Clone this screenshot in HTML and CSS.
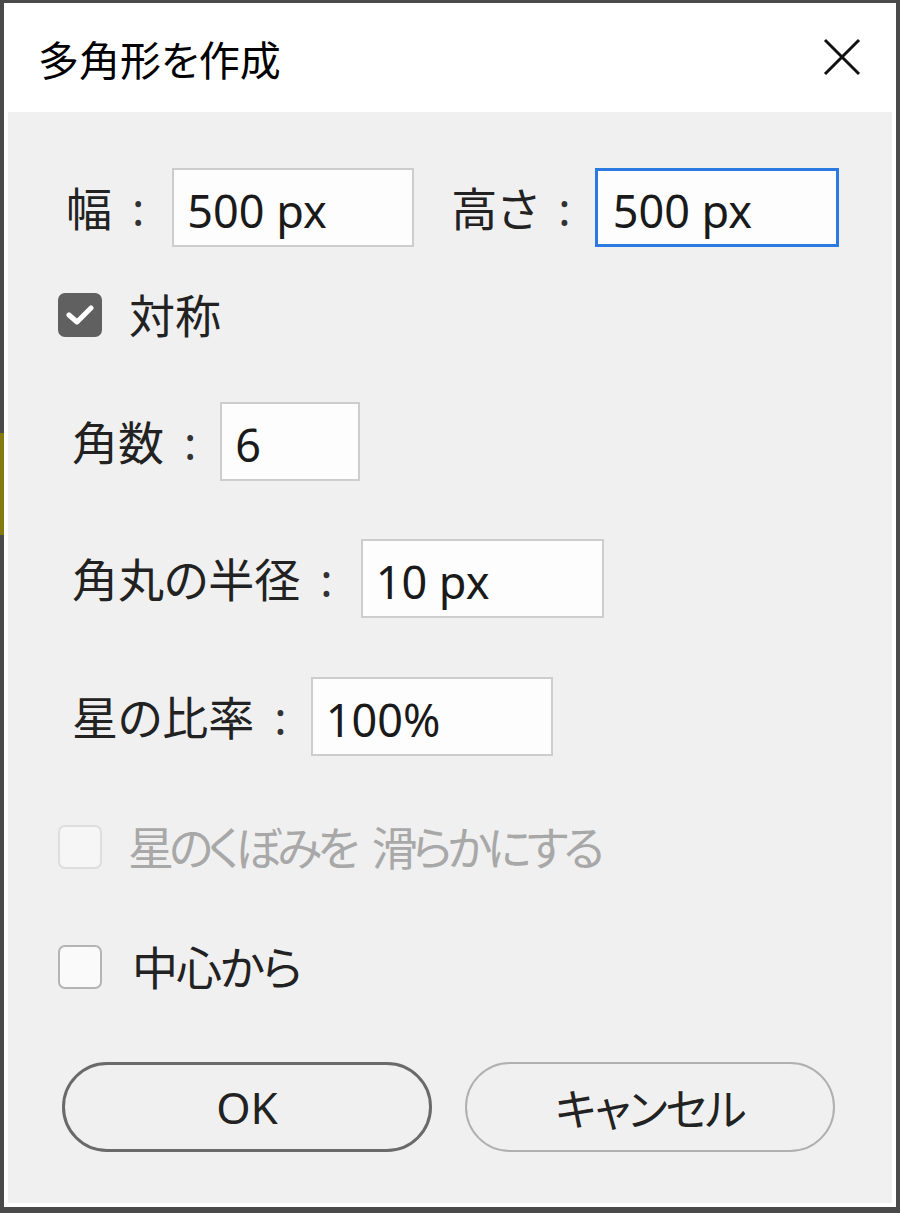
FILE: index.html
```html
<!DOCTYPE html>
<html lang="ja">
<head>
    <meta charset="UTF-8">
    <meta name="viewport" content="width=device-width, initial-scale=1.0">
    <title>多角形を作成</title>
    <link rel="stylesheet" href="styles.css">
</head>
<body>
    <div class="window">
        <div class="titlebar">
            <span class="title">多角形を作成</span>
            <svg class="close" width="38" height="38" viewBox="0 0 38 38">
                <path d="M2 2 L36 36 M36 2 L2 36" stroke="#111" stroke-width="3" fill="none"/>
            </svg>
        </div>

        <div class="panel">
            <div class="row size-row">
                <span class="lbl">幅</span><span class="colon c-wide">:</span>
                <div class="textbox w242">500 px</div>
                <span class="lbl second">高さ</span><span class="colon">:</span>
                <div class="textbox w244 focused">500 px</div>
            </div>

            <div class="check check-sym">
                <span class="box checked">
                    <svg width="28" height="22" viewBox="0 0 28 22">
                        <path d="M3 11 L11 18 L25 4" stroke="#fff" stroke-width="5" fill="none" stroke-linecap="round" stroke-linejoin="round"/>
                    </svg>
                </span>
                <span class="check-text">対称</span>
            </div>

            <div class="row indent r-sides">
                <span class="lbl">角数</span><span class="colon">:</span>
                <div class="textbox w140">6</div>
            </div>

            <div class="row indent r-radius">
                <span class="lbl">角丸の半径</span><span class="colon c-wide">:</span>
                <div class="textbox w243">10 px</div>
            </div>

            <div class="row indent r-star">
                <span class="lbl">星の比率</span><span class="colon">:</span>
                <div class="textbox w242">100%</div>
            </div>

            <div class="check disabled c-smooth">
                <span class="box"></span>
                <span class="check-text">星のくぼみを <span class="gap">滑らかにする</span></span>
            </div>

            <div class="check c-center">
                <span class="box"></span>
                <span class="check-text">中心から</span>
            </div>

            <div class="buttons">
                <button class="btn primary">OK</button>
                <button class="btn">キャンセル</button>
            </div>
        </div>
    </div>
</body>
</html>
```

FILE: styles.css
```css
html, body { margin: 0; height: 1213px; overflow: hidden; }
body {
    font-family: "Noto Sans", "Noto Sans CJK JP", sans-serif;
    font-feature-settings: "palt";
    color: #222;
    background: linear-gradient(to bottom, #4a4a4a 433px, #857a12 433px, #857a12 535px, #4a4a4a 535px) no-repeat 0 0 / 4px 100%, #4a4a4a;
}

.window { margin: 3px 4px 0 4px; height: 1204px; background: #fff; display: flex; flex-direction: column; }

.titlebar { height: 109px; display: flex; align-items: center; justify-content: space-between; padding: 0 35px 0 34px; }
.title { font-size: 41px; color: #000; }
.close { display: block; margin-top: -2px; }

.panel { flex: 1; margin: 0 4px 4px 4px; background: #f0f0f0; padding: 56px 0 0 50px; display: flex; flex-direction: column; align-items: flex-start; }

.row { display: flex; align-items: center; font-size: 46px; padding-left: 8px; }
.indent { padding-left: 14px; }
.lbl { line-height: 1; }
.lbl.second { margin-left: 37px; }
.colon { margin: 0 24px 0 20px; color: #333; }
.colon.c-wide { margin-right: 28px; }

.textbox { height: 79px; box-sizing: border-box; border: 2px solid #cdcdcd; background: #fdfdfd; color: #1a1a1a; display: flex; align-items: center; padding: 6px 0 0 13px; font-size: 45px; }
.textbox.focused { border: 3px solid #2a7ae2; padding-left: 15px; }
.w140 { width: 140px; }
.w242 { width: 242px; }
.w243 { width: 243px; }
.w244 { width: 244px; }

.check { display: flex; align-items: center; font-size: 46px; }
.box { width: 44px; height: 44px; box-sizing: border-box; border: 2px solid #b4b4b4; border-radius: 7px; background: #fafafa; display: flex; align-items: center; justify-content: center; }
.box.checked { background: #606060; border-color: #606060; }
.check-text { margin-left: 27px; line-height: 1; }
.disabled .box { border-color: #dedede; background: #f6f6f6; }
.disabled .check-text { color: #a8a8a8; margin-left: 26px; letter-spacing: -5px; }
.disabled .gap { margin-left: 10px; }

.check-sym { margin-top: 45px; }
.r-sides { margin-top: 64px; }
.r-radius { margin-top: 58px; }
.r-star { margin-top: 59px; }
.c-smooth { margin-top: 68px; }
.c-center { margin-top: 74px; }
.c-center .check-text { margin-left: 30px; letter-spacing: -2px; }

.buttons { display: flex; gap: 33px; margin: 72px 0 0 4px; }
.btn { width: 370px; height: 90px; border-radius: 45px; border: 2px solid #b0b0b0; background: #f0f0f0; font-family: inherit; font-feature-settings: "palt"; font-size: 44px; color: #222; padding: 0; letter-spacing: -2px; }
.btn.primary { border: 3px solid #6a6a6a; letter-spacing: 0; }
```
